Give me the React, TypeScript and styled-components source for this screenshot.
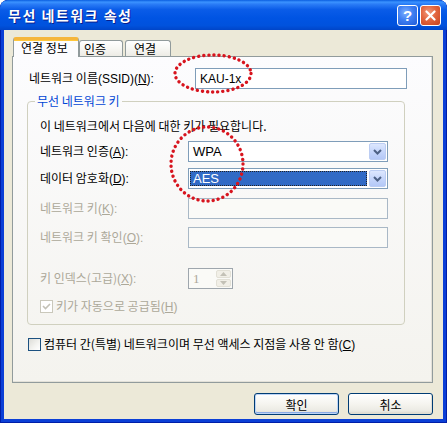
import React from "react";
import styled, { createGlobalStyle } from "styled-components";

const GlobalStyle = createGlobalStyle`
  html, body { margin: 0; padding: 0; background: #ffffff; }
  body {
    font-family: "Liberation Sans", "Noto Sans CJK KR", sans-serif;
    font-size: 12px;
    color: #000;
  }
`;

const Window = styled.div`
  position: relative;
  width: 447px;
  height: 423px;
  box-sizing: border-box;
  display: flex;
  flex-direction: column;
  background: #0b3fd6;
  box-shadow: inset 0 0 0 1px #001ea8;
  border-radius: 8px 8px 0 0;
  overflow: hidden;
`;

const TitleBar = styled.div`
  flex: none;
  height: 30px;
  display: flex;
  align-items: center;
  padding: 0 6px 0 8px;
  gap: 2px;
  background: linear-gradient(
    to bottom,
    #0a5ee0 0%,
    #3b93ff 7%,
    #2a7cf6 14%,
    #0a5ce8 32%,
    #0054e3 60%,
    #0052dd 85%,
    #0045c8 100%
  );
  border-radius: 7px 7px 0 0;
`;

const Title = styled.div`
  flex: 1;
  color: #fff;
  font-family: "Noto Sans CJK KR", sans-serif;
  font-weight: bold;
  font-size: 14px;
  letter-spacing: 1.5px;
  line-height: 16px;
  text-shadow: 1px 1px 0 #0a1d8c;
`;

const CaptionButton = styled.div<{ $variant: "help" | "close" }>`
  width: 21px;
  height: 21px;
  box-sizing: border-box;
  border: 1px solid #ffffff;
  border-radius: 3px;
  display: flex;
  align-items: center;
  justify-content: center;
  color: #fff;
  font-family: "Liberation Sans", sans-serif;
  font-weight: bold;
  font-size: 15px;
  background: ${(p) =>
    p.$variant === "close"
      ? "radial-gradient(circle at 40% 35%, #f29a7c 0%, #e2653e 45%, #c9421d 100%)"
      : "radial-gradient(circle at 40% 35%, #7fb0ff 0%, #3f7ff2 45%, #1f5bd8 100%)"};
`;

const Body = styled.div`
  flex: 1;
  margin: 0 4px 4px;
  background: #ece9d8;
  display: flex;
  flex-direction: column;
  padding: 7px 10px 4px 8px;
`;

const TabStrip = styled.div`
  flex: none;
  height: 19px;
  display: flex;
  align-items: flex-end;
  padding-left: 1px;
  position: relative;
  z-index: 1;
`;

const Tab = styled.div<{ $active?: boolean; $w: number; $pad: number; $gap?: number }>`
  box-sizing: border-box;
  width: ${(p) => p.$w}px;
  height: ${(p) => (p.$active ? 20 : 16)}px;
  margin-bottom: ${(p) => (p.$active ? -1 : 0)}px;
  margin-left: ${(p) => p.$gap ?? 0}px;
  padding-left: ${(p) => p.$pad}px;
  font-family: "Noto Sans CJK KR", sans-serif;
  font-size: 12px;
  line-height: 15px;
  display: flex;
  align-items: center;
  border: 1px solid #919b9c;
  border-bottom: ${(p) => (p.$active ? "none" : "none")};
  border-radius: 3px 3px 0 0;
  background: ${(p) =>
    p.$active
      ? "#fcfcfe"
      : "linear-gradient(to bottom, #ffffff 0%, #f7f7f3 50%, #ecebe5 100%)"};
  ${(p) =>
    p.$active
      ? "border-top: 3px solid #f5b63c; box-shadow: inset 0 1px 0 #ffc73c; padding-bottom: 2px;"
      : ""}
`;

const Panel = styled.div`
  flex: none;
  height: 327px;
  box-sizing: border-box;
  border: 1px solid #919b9c;
  background: linear-gradient(to bottom, #fcfcfe 0%, #f4f3ee 100%);
  box-shadow: inset -1px -1px 0 #e3e1d8;
  display: flex;
  flex-direction: column;
  padding: 11px 0 0 14px;
`;

const Row = styled.div<{ $mt?: number; $ml?: number }>`
  display: flex;
  align-items: center;
  margin-top: ${(p) => p.$mt ?? 0}px;
  margin-left: ${(p) => p.$ml ?? 0}px;
`;

const Label = styled.div<{ $w?: number; $disabled?: boolean }>`
  flex: none;
  width: ${(p) => (p.$w ? `${p.$w}px` : "auto")};
  font-family: "Noto Sans CJK KR", sans-serif;
  font-size: 12px;
  line-height: 16px;
  color: ${(p) => (p.$disabled ? "#aca899" : "#000")};
  white-space: nowrap;
  u { text-decoration-thickness: 1px; text-underline-offset: 1px; }
`;

const Latin = styled.span`
  font-family: "Liberation Sans", sans-serif;
`;

const TextBox = styled.div<{ $w: number; $disabled?: boolean }>`
  flex: none;
  box-sizing: border-box;
  width: ${(p) => p.$w}px;
  height: 21px;
  border: 1px solid ${(p) => (p.$disabled ? "#a9b8c6" : "#7f9db9")};
  background: ${(p) => (p.$disabled ? "#fafaf7" : "#ffffff")};
  display: flex;
  align-items: center;
  padding-left: 4px;
  font-family: "Liberation Sans", sans-serif;
  font-size: 12px;
`;

const GroupBox = styled.fieldset`
  margin: 5px 0 0 0;
  width: 378px;
  box-sizing: border-box;
  border: 1px solid #d0d0bf;
  border-radius: 4px;
  padding: 0 0 9px 12px;
  display: flex;
  flex-direction: column;
`;

const Legend = styled.legend`
  margin-left: -5px;
  padding: 0 2px;
  font-family: "Noto Sans CJK KR", sans-serif;
  font-size: 12px;
  line-height: 14px;
  color: #0046d5;
`;

const Combo = styled.div`
  flex: none;
  box-sizing: border-box;
  width: 200px;
  height: 21px;
  border: 1px solid #7f9db9;
  background: #fff;
  display: flex;
  align-items: center;
  padding: 1px;
`;

const ComboValue = styled.div<{ $selected?: boolean }>`
  flex: 1;
  align-self: stretch;
  margin: 1px 2px 1px 0;
  box-sizing: border-box;
  display: flex;
  align-items: center;
  padding-left: 3px;
  font-family: "Liberation Sans", sans-serif;
  font-size: 13px;
  ${(p) =>
    p.$selected
      ? "background: #316ac5; color: #fff; outline: 1px dotted #222; outline-offset: -1px;"
      : "color: #000;"}
`;

const ComboButton = styled.div`
  flex: none;
  width: 17px;
  height: 17px;
  box-sizing: border-box;
  border: 1px solid #bccdf3;
  border-radius: 2px;
  background: linear-gradient(to bottom, #dde7fe 0%, #c6d6fb 50%, #b4c8f7 100%);
  display: flex;
  align-items: center;
  justify-content: center;
`;

const Spin = styled.div`
  flex: none;
  box-sizing: border-box;
  width: 45px;
  height: 21px;
  border: 1px solid #9ea6ad;
  background: #fafaf7;
  display: flex;
  padding: 1px;
`;

const SpinValue = styled.div`
  flex: 1;
  display: flex;
  align-items: center;
  padding-left: 3px;
  color: #aca899;
  font-family: "Liberation Serif", serif;
  font-size: 13px;
`;

const SpinButtons = styled.div`
  flex: none;
  width: 15px;
  display: flex;
  flex-direction: column;
  gap: 1px;
`;

const SpinButton = styled.div`
  flex: 1;
  box-sizing: border-box;
  border: 1px solid #e2e0d6;
  border-radius: 2px;
  background: #f1efe7;
  display: flex;
  align-items: center;
  justify-content: center;
`;

const CheckRow = styled.div<{ $mt: number; $ml: number }>`
  display: flex;
  align-items: center;
  gap: 3px;
  margin-top: ${(p) => p.$mt}px;
  margin-left: ${(p) => p.$ml}px;
`;

const CheckBox = styled.div<{ $disabled?: boolean }>`
  flex: none;
  width: 13px;
  height: 13px;
  box-sizing: border-box;
  border: 1px solid ${(p) => (p.$disabled ? "#cac8bb" : "#1c5180")};
  background: ${(p) =>
    p.$disabled ? "#ffffff" : "linear-gradient(135deg, #dcdcd7 0%, #f4f4f1 60%, #ffffff 100%)"};
  display: flex;
  align-items: center;
  justify-content: center;
`;

const ButtonRow = styled.div`
  flex: none;
  margin-top: 10px;
  display: flex;
  justify-content: flex-end;
  gap: 9px;
`;

const PushButton = styled.div<{ $default?: boolean }>`
  width: 85px;
  height: 22px;
  box-sizing: border-box;
  border: 1px solid #003c74;
  border-radius: 3px;
  background: linear-gradient(to bottom, #ffffff 0%, #f5f4ef 50%, #ebeae3 85%, #d8d3c8 100%);
  box-shadow: ${(p) =>
    p.$default
      ? "inset 0 0 0 1px #bcd4f6, inset 0 -1px 0 1px #8aaae6"
      : "inset -1px -1px 0 #e0ded3"};
  display: flex;
  align-items: center;
  justify-content: center;
  font-family: "Noto Sans CJK KR", sans-serif;
  font-size: 12px;
`;

const Overlay = styled.svg`
  position: absolute;
  top: 0;
  left: 0;
  pointer-events: none;
  z-index: 10;
`;

const Chevron = () => (
  <svg width="9" height="6" viewBox="0 0 9 6">
    <polyline points="1,1 4.5,4.5 8,1" fill="none" stroke="#4d6185" strokeWidth="2" />
  </svg>
);

const Check = ({ color }: { color: string }) => (
  <svg width="9" height="9" viewBox="0 0 9 9">
    <polyline points="1,4 3.5,6.5 8,2" fill="none" stroke={color} strokeWidth="1.6" />
  </svg>
);

const Arrow = ({ up }: { up?: boolean }) => (
  <svg width="7" height="4" viewBox="0 0 7 4">
    <polygon points={up ? "3.5,0 7,4 0,4" : "0,0 7,0 3.5,4"} fill="#c3c1b6" />
  </svg>
);

export default function App() {
  return (
    <>
      <GlobalStyle />
      <Window>
        <TitleBar>
          <Title>무선 네트워크 속성</Title>
          <CaptionButton $variant="help">?</CaptionButton>
          <CaptionButton $variant="close">
            <svg width="11" height="11" viewBox="0 0 11 11">
              <path d="M1.5 1.5 L9.5 9.5 M9.5 1.5 L1.5 9.5" stroke="#fff" strokeWidth="2.2" strokeLinecap="round" />
            </svg>
          </CaptionButton>
        </TitleBar>
        <Body>
          <TabStrip>
            <Tab $active $w={66} $pad={7}>연결 정보</Tab>
            <Tab $w={44} $pad={4}>인증</Tab>
            <Tab $w={46} $pad={8} $gap={2}>연결</Tab>
          </TabStrip>
          <Panel>
            <Row $ml={2}>
              <Label $w={166}>
                네트워크 이름<Latin>(SSID)(<u>N</u>):</Latin>
              </Label>
              <TextBox $w={212}>KAU-1x</TextBox>
            </Row>
            <GroupBox>
              <Legend>무선 네트워크 키</Legend>
              <Row $mt={10}>
                <Label>이 네트워크에서 다음에 대한 키가 필요합니다.</Label>
              </Row>
              <Row $mt={7}>
                <Label $w={148}>
                  네트워크 인증<Latin>(<u>A</u>):</Latin>
                </Label>
                <Combo>
                  <ComboValue>WPA</ComboValue>
                  <ComboButton>
                    <Chevron />
                  </ComboButton>
                </Combo>
              </Row>
              <Row $mt={6}>
                <Label $w={148}>
                  데이터 암호화<Latin>(<u>D</u>):</Latin>
                </Label>
                <Combo>
                  <ComboValue $selected>AES</ComboValue>
                  <ComboButton>
                    <Chevron />
                  </ComboButton>
                </Combo>
              </Row>
              <Row $mt={9}>
                <Label $w={148} $disabled>
                  네트워크 키<Latin>(<u>K</u>):</Latin>
                </Label>
                <TextBox $w={200} $disabled />
              </Row>
              <Row $mt={8}>
                <Label $w={148} $disabled>
                  네트워크 키 확인<Latin>(<u>O</u>):</Latin>
                </Label>
                <TextBox $w={200} $disabled />
              </Row>
              <Row $mt={20}>
                <Label $w={148} $disabled>
                  키 인덱스(고급)<Latin>(<u>X</u>):</Latin>
                </Label>
                <Spin>
                  <SpinValue>1</SpinValue>
                  <SpinButtons>
                    <SpinButton>
                      <Arrow up />
                    </SpinButton>
                    <SpinButton>
                      <Arrow />
                    </SpinButton>
                  </SpinButtons>
                </Spin>
              </Row>
              <CheckRow $mt={9} $ml={0}>
                <CheckBox $disabled>
                  <Check color="#c3c1b6" />
                </CheckBox>
                <Label $disabled>
                  키가 자동으로 공급됨<Latin>(<u>H</u>)</Latin>
                </Label>
              </CheckRow>
            </GroupBox>
            <CheckRow $mt={11} $ml={1}>
              <CheckBox />
              <Label>
                컴퓨터 간(특별) 네트워크이며 무선 액세스 지점을 사용 안 함<Latin>(<u>C</u>)</Latin>
              </Label>
            </CheckRow>
          </Panel>
          <ButtonRow>
            <PushButton $default>확인</PushButton>
            <PushButton>취소</PushButton>
          </ButtonRow>
        </Body>
        <Overlay width="447" height="424" viewBox="0 0 447 424">
          <ellipse
            cx="213"
            cy="73.5"
            rx="38"
            ry="18.5"
            fill="none"
            stroke="#d7141e"
            strokeWidth="3.4"
            strokeLinecap="round"
            strokeDasharray="0.1 5"
          />
          <ellipse
            cx="207"
            cy="164"
            rx="36"
            ry="37"
            fill="none"
            stroke="#d7141e"
            strokeWidth="3.4"
            strokeLinecap="round"
            strokeDasharray="0.1 5"
          />
        </Overlay>
      </Window>
    </>
  );
}
